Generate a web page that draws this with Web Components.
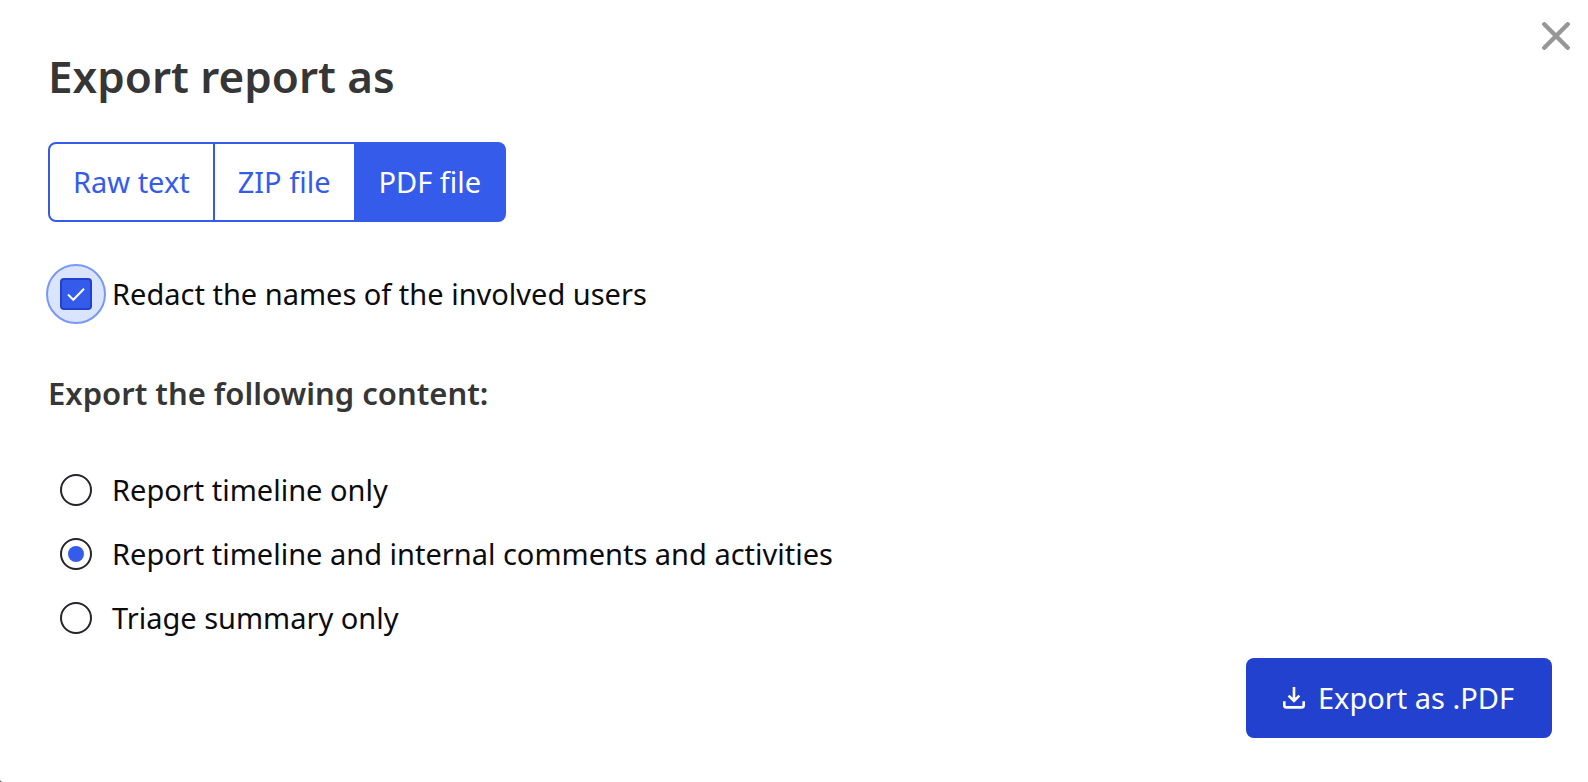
<!DOCTYPE html>
<html lang="en">
<head>
<meta charset="utf-8">
<meta name="viewport" content="width=device-width, initial-scale=1">
<title>Export report as</title>
<style>
  html { background: #555; }
  body { margin: 0; font-family: "Noto Sans", "Open Sans", sans-serif; font-size: 29px; line-height: 40px; }
</style>
</head>
<body>
<export-dialog>
  <span slot="title">Export report as</span>
  <format-switch value="PDF file"></format-switch>
  <check-option>Redact the names of the involved users</check-option>
  <content-options>
    <span slot="heading">Export the following content:</span>
    <span slot="timeline">Report timeline only</span>
    <span slot="internal">Report timeline and internal comments and activities</span>
    <span slot="triage">Triage summary only</span>
  </content-options>
  <export-button slot="actions">Export as .PDF</export-button>
</export-dialog>

<template id="export-dialog">
  <style>
    :host { display: block; background: #fff; border-bottom-left-radius: 3px; }
    section {
      position: relative; box-sizing: border-box; min-height: 100vh;
      display: flex; flex-direction: column; align-items: flex-start;
      padding: 48px 36px 44px 48px;
    }
    h1 { margin: 0 0 38px; font-size: 44px; line-height: 56px; font-weight: 600; color: #363636; }
    footer { margin-top: auto; align-self: flex-end; }
    .close {
      position: absolute; top: 12px; right: 8px; width: 48px; height: 48px;
      display: grid; place-items: center; padding: 0; border: 0; background: none; cursor: pointer;
    }
    svg { display: block; }
  </style>
  <section role="dialog" aria-labelledby="title">
    <h1 id="title"><slot name="title"></slot></h1>
    <button class="close" type="button" aria-label="Close">
      <svg width="28" height="28" viewBox="0 0 28 28" fill="none" stroke="#979797" stroke-width="4.4" stroke-linecap="round"><path d="M2.3 2.3 25.7 25.7M25.7 2.3 2.3 25.7"/></svg>
    </button>
    <slot></slot>
    <footer><slot name="actions"></slot></footer>
  </section>
</template>

<template id="format-switch">
  <style>
    :host { display: block; margin-bottom: 42px; }
    div { display: flex; }
    button {
      box-sizing: border-box; height: 80px; padding: 0 23px; border: 2px solid #355beb;
      background: #fff; color: #355beb; font: inherit; white-space: nowrap; cursor: pointer;
    }
    button:first-child { border-radius: 8px 0 0 8px; }
    button:last-child { border-radius: 0 8px 8px 0; }
    button + button { border-left: 0; }
    button[aria-pressed="true"] { background: #355beb; color: #fff; }
  </style>
  <div role="group" aria-label="File format">
    <button type="button">Raw text</button>
    <button type="button">ZIP file</button>
    <button type="button">PDF file</button>
  </div>
</template>

<template id="check-option">
  <style>
    :host { display: block; margin-bottom: 49px; color: #0c0c0e; }
    label { display: flex; align-items: center; min-height: 60px; gap: 8px; }
    .mark { position: relative; display: grid; padding: 12px; }
    .mark::before {
      content: ""; position: absolute; inset: -2px; box-sizing: border-box;
      border: 2px solid #7898f8; border-radius: 50%; background: #dbe4fd;
    }
    input {
      appearance: none; grid-area: 1 / 1; position: relative; box-sizing: border-box;
      width: 32px; height: 32px; margin: 0; border: 2px solid #2241cf; border-radius: 4px; background: #fff;
    }
    input:checked { background: #355beb; }
    svg { grid-area: 1 / 1; position: relative; pointer-events: none; }
  </style>
  <label>
    <span class="mark">
      <input type="checkbox" checked>
      <svg width="32" height="32" viewBox="0 0 32 32" fill="none" stroke="#fff" stroke-width="2"><path d="M8 16.5 13.3 21.8 24 10.8"/></svg>
    </span>
    <span><slot></slot></span>
  </label>
</template>

<template id="content-options">
  <style>
    :host { display: block; color: #0c0c0e; }
    fieldset { margin: 0; padding: 0; border: 0; min-width: 0; }
    legend { padding: 0; margin-bottom: 45px; font-size: 31px; font-weight: 600; color: #363636; }
    label { display: flex; align-items: center; min-height: 64px; gap: 20px; padding-left: 12px; }
    input {
      appearance: none; flex: none; box-sizing: border-box; width: 32px; height: 32px; margin: 0;
      display: grid; place-items: center; border: 2px solid #26242c; border-radius: 50%; background: #fff;
    }
    input:checked::before { content: ""; width: 16px; height: 16px; border-radius: 50%; background: #355beb; }
  </style>
  <fieldset>
    <legend><slot name="heading"></slot></legend>
    <label><input type="radio" name="content" value="timeline"><slot name="timeline"></slot></label>
    <label><input type="radio" name="content" value="internal" checked><slot name="internal"></slot></label>
    <label><input type="radio" name="content" value="triage"><slot name="triage"></slot></label>
  </fieldset>
</template>

<template id="export-button">
  <style>
    :host { display: block; }
    button {
      display: flex; align-items: center; gap: 12px; min-width: 306px; height: 80px; padding: 0 36px;
      border: 0; border-radius: 8px; background: #2241cf; color: #fff; font: inherit; cursor: pointer;
    }
    svg { flex: none; }
  </style>
  <button type="button">
    <svg width="24" height="24" viewBox="0 0 24 24" fill="none" stroke="#fff" stroke-width="2.6"><path d="M12 1V15.5M6.6 9.6 12 15 17.4 9.6M2.3 15.3V19.2Q2.3 21.4 4.5 21.4H19.5Q21.7 21.4 21.7 19.2V15.3"/></svg>
    <span><slot></slot></span>
  </button>
</template>

<script>
  class TemplateElement extends HTMLElement {
    constructor() {
      super();
      const template = document.getElementById(this.localName);
      this.attachShadow({ mode: "open" }).append(template.content.cloneNode(true));
    }
  }

  class FormatSwitch extends TemplateElement {
    connectedCallback() {
      this.buttons = [...this.shadowRoot.querySelectorAll("button")];
      this.buttons.forEach(b => b.addEventListener("click", () => this.select(b.textContent)));
      this.select(this.getAttribute("value"));
    }
    select(value) {
      this.buttons.forEach(b => b.setAttribute("aria-pressed", String(b.textContent === value)));
    }
  }

  customElements.define("export-dialog", class extends TemplateElement {});
  customElements.define("format-switch", FormatSwitch);
  customElements.define("check-option", class extends TemplateElement {});
  customElements.define("content-options", class extends TemplateElement {});
  customElements.define("export-button", class extends TemplateElement {});
</script>
</body>
</html>
